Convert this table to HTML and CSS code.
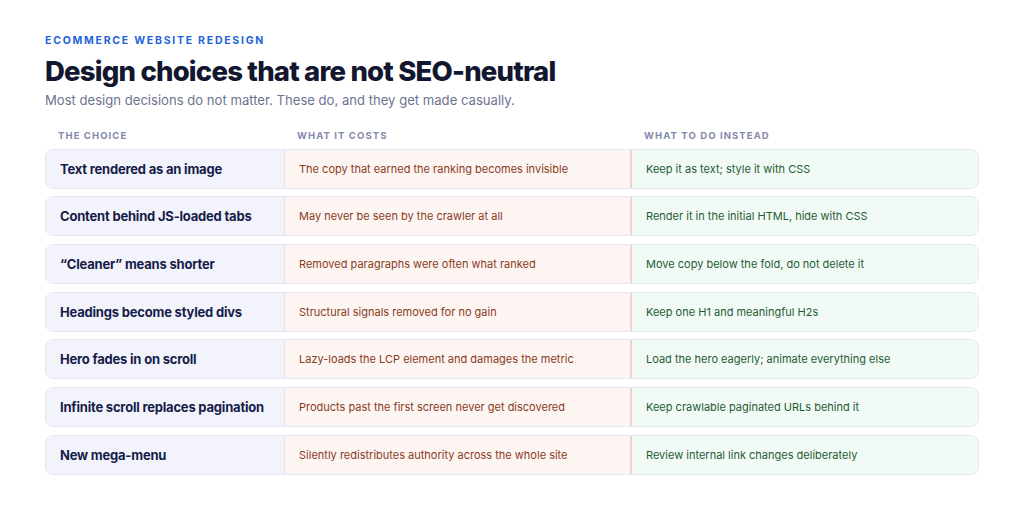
FILE: index.html
```html
<!DOCTYPE html>
<html>
<head>
<meta charset="utf-8">
<link rel="stylesheet" href="styles.css">
</head>
<body>
<main class="page">
  <div class="eyebrow">ECOMMERCE WEBSITE REDESIGN</div>
  <h1 class="title">Design choices that are not SEO-neutral</h1>
  <p class="subtitle">Most design decisions do not matter. These do, and they get made casually.</p>
  <div class="table">
    <div class="head">
      <div>THE CHOICE</div>
      <div>WHAT IT COSTS</div>
      <div>WHAT TO DO INSTEAD</div>
    </div>
    <div class="row"><div class="c1">Text rendered as an image</div><div class="c2">The copy that earned the ranking becomes invisible</div><div class="c3">Keep it as text; style it with CSS</div></div>
    <div class="row"><div class="c1">Content behind JS-loaded tabs</div><div class="c2">May never be seen by the crawler at all</div><div class="c3">Render it in the initial HTML, hide with CSS</div></div>
    <div class="row"><div class="c1">“Cleaner” means shorter</div><div class="c2">Removed paragraphs were often what ranked</div><div class="c3">Move copy below the fold, do not delete it</div></div>
    <div class="row"><div class="c1">Headings become styled divs</div><div class="c2">Structural signals removed for no gain</div><div class="c3">Keep one H1 and meaningful H2s</div></div>
    <div class="row"><div class="c1">Hero fades in on scroll</div><div class="c2">Lazy-loads the LCP element and damages the metric</div><div class="c3">Load the hero eagerly; animate everything else</div></div>
    <div class="row"><div class="c1">Infinite scroll replaces pagination</div><div class="c2">Products past the first screen never get discovered</div><div class="c3">Keep crawlable paginated URLs behind it</div></div>
    <div class="row"><div class="c1">New mega-menu</div><div class="c2">Silently redistributes authority across the whole site</div><div class="c3">Review internal link changes deliberately</div></div>
  </div>
</main>
</body>
</html>
```
FILE: styles.css
```css
* { box-sizing: border-box; }
html, body { margin: 0; padding: 0; background: #ffffff; }
body { font-family: Inter, "Noto Sans", sans-serif; }
.page { padding: 34px 45px 0 45px; }
.eyebrow {
  font-size: 10.5px; font-weight: 700; letter-spacing: 1.75px; color: #1f63dc;
  line-height: 14px;
}
.title {
  margin: 5px 0 0 0; font-size: 27.5px; font-weight: 800; letter-spacing: -0.8px;
  color: #12172f; line-height: 36px;
}
.subtitle {
  margin: 2px 0 0 0; font-size: 13.1px; color: #6d7390; line-height: 18px;
}
.table { margin-top: 21px; display: flex; flex-direction: column; gap: 7.67px; }
.head, .row { display: grid; grid-template-columns: 239px 347px 1fr; }
.head > div {
  padding: 0 13px; font-size: 9.5px; font-weight: 700; letter-spacing: 1.1px;
  color: #8389ad; line-height: 12px;
}
.head { margin-bottom: -1px; }
.row {
  border: 1px solid #e4e7f0; border-radius: 8px; overflow: hidden; height: 40px;
}
.row > div { display: flex; align-items: center; padding: 0 14px; white-space: nowrap; }
.c1 { background: #f3f4fb; font-size: 13px; letter-spacing: -0.2px; font-weight: 700; color: #161c4a; border-right: 1px solid #ebe4e6; }
.c2 { background: #fdf5f2; font-size: 11px; color: #8a3b1c; border-right: 2px solid #f0d3c4; }
.c3 { background: #f2faf5; font-size: 11px; color: #1f5c36; }
```
